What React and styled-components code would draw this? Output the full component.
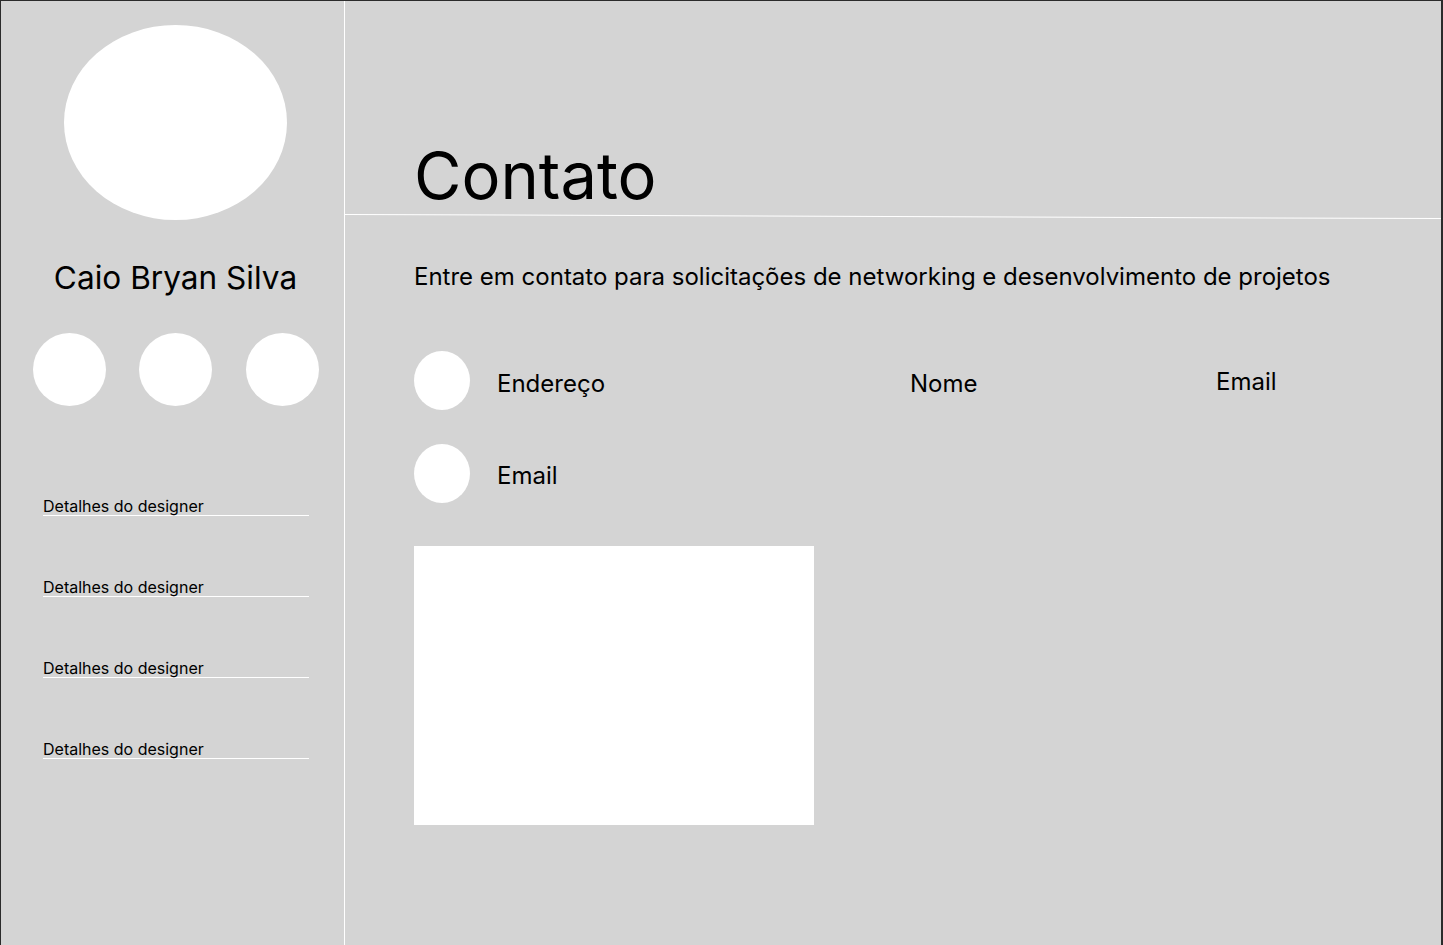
import React from "react";
import styled, { createGlobalStyle } from "styled-components";

const GlobalStyle = createGlobalStyle`
  html, body {
    margin: 0;
    padding: 0;
    background: #d4d4d4;
  }
  * {
    box-sizing: border-box;
  }
`;

const Frame = styled.div`
  width: 1443px;
  height: 945px;
  display: flex;
  background: #d4d4d4;
  border-top: 1px solid #2b2b2b;
  border-left: 1px solid #2b2b2b;
  border-right: 2px solid #2b2b2b;
  font-family: Inter, "Noto Sans", sans-serif;
  color: #000;
  overflow: hidden;
`;

const Sidebar = styled.aside`
  width: 344px;
  flex-shrink: 0;
  border-right: 1px solid #ffffff;
  display: flex;
  flex-direction: column;
  align-items: center;
  padding: 24px 0 0 6px;
`;

const Avatar = styled.div`
  width: 223px;
  height: 195px;
  border-radius: 50%;
  background: #fff;
`;

const Name = styled.h2`
  margin: 38px 0 0;
  font-size: 31.6px;
  font-weight: 400;
  line-height: 40px;
`;

const Socials = styled.div`
  display: flex;
  gap: 33.5px;
  margin-top: 35px;
`;

const Dot = styled.div`
  width: ${(p) => p.size}px;
  height: ${(p) => p.h || p.size}px;
  border-radius: 50%;
  background: #fff;
  flex-shrink: 0;
`;

const Details = styled.ul`
  list-style: none;
  margin: 91px 0 0;
  padding: 0 0 0 36px;
  align-self: stretch;
  display: flex;
  flex-direction: column;
  gap: 62px;
`;

const DetailItem = styled.li`
  width: 266px;
  font-size: 16px;
  line-height: 18px;
  border-bottom: 1px solid #fff;
`;

const Main = styled.main`
  flex: 1;
  display: flex;
  flex-direction: column;
`;

const Header = styled.header`
  height: 214px;
  padding: 0 0 0 69px;
  display: flex;
  align-items: flex-end;
  position: relative;

  &::after {
    content: "";
    position: absolute;
    left: 0;
    right: 0;
    bottom: 0;
    height: 1px;
    background: #fff;
    transform-origin: left center;
    transform: rotate(0.21deg);
  }
`;

const Title = styled.h1`
  margin: 0;
  font-size: 65px;
  font-weight: 400;
  line-height: 78px;
`;

const Body = styled.section`
  padding: 47px 0 0 69px;
`;

const Lead = styled.p`
  margin: 0;
  font-size: 24px;
  line-height: 30px;
`;

const ContactGrid = styled.div`
  display: grid;
  grid-template-columns: 496px 306px auto;
  margin-top: 59px;
  row-gap: 34px;
`;

const ContactItem = styled.div`
  display: flex;
  align-items: center;
  gap: 27px;
  height: 59px;
`;

const Label = styled.span`
  font-size: 24px;
  line-height: 30px;
  transform: translateY(${(p) => p.shift ?? 2.5}px);
`;

const MapBox = styled.div`
  width: 400px;
  height: 279px;
  background: #fff;
  margin-top: 43px;
`;

const details = ["Detalhes do designer", "Detalhes do designer", "Detalhes do designer", "Detalhes do designer"];

export default function App() {
  return (
    <>
      <GlobalStyle />
      <Frame>
        <Sidebar>
          <Avatar />
          <Name>Caio Bryan Silva</Name>
          <Socials>
            <Dot size={73} />
            <Dot size={73} />
            <Dot size={73} />
          </Socials>
          <Details>
            {details.map((d, i) => (
              <DetailItem key={i}>{d}</DetailItem>
            ))}
          </Details>
        </Sidebar>
        <Main>
          <Header>
            <Title>Contato</Title>
          </Header>
          <Body>
            <Lead>Entre em contato para solicitações de networking e desenvolvimento de projetos</Lead>
            <ContactGrid>
              <ContactItem>
                <Dot size={56} h={59} />
                <Label>Endereço</Label>
              </ContactItem>
              <ContactItem>
                <Label>Nome</Label>
              </ContactItem>
              <ContactItem>
                <Label shift={0.5}>Email</Label>
              </ContactItem>
              <ContactItem>
                <Dot size={56} h={59} />
                <Label shift={1.5}>Email</Label>
              </ContactItem>
            </ContactGrid>
            <MapBox />
          </Body>
        </Main>
      </Frame>
    </>
  );
}
